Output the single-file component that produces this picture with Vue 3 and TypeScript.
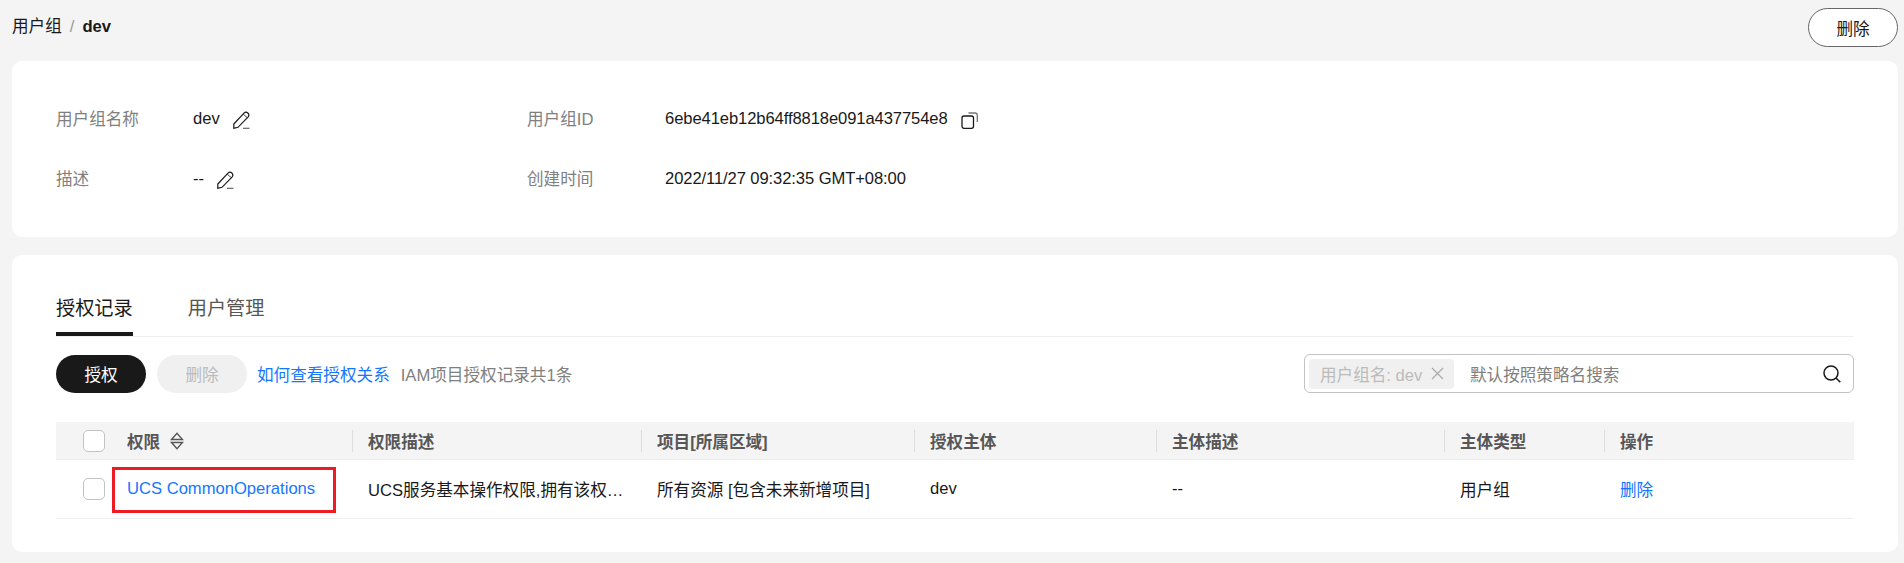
<script setup lang="ts">
const columns = [
  { title: '权限描述' },
  { title: '项目[所属区域]' },
  { title: '授权主体' },
  { title: '主体描述' },
  { title: '主体类型' },
  { title: '操作' },
]
</script>

<template>
  <div class="page">
    <header class="topbar">
      <div class="crumb">
        <span>用户组</span><span class="sep">/</span><strong>dev</strong>
      </div>
      <button class="btn-outline" type="button">删除</button>
    </header>

    <section class="card info">
      <div class="info-grid">
        <div class="field field-a">
          <span class="label">用户组名称</span>
          <span class="value">dev</span>
          <svg class="ico pencil" viewBox="0 0 18 18" fill="none" stroke="currentColor" stroke-width="1.200">
            <path d="M.8 13 11 2.200c1-1 2.600-1.200 3.800-.2s1.400 2.600.4 3.800L5 16.300.8 17.300z" />
            <path d="M10.200 3.200l4.300 3.600" stroke-width="0.8" />
            <path d="M10 17.300h6.500" stroke="#666" />
          </svg>
        </div>
        <div class="field">
          <span class="label">用户组ID</span>
          <span class="value latin">6ebe41eb12b64ff8818e091a437754e8</span>
          <svg class="ico copy" viewBox="0 0 17 17" fill="none" stroke="currentColor" stroke-width="1.300">
            <rect x="1" y="4" width="11.500" height="12.300" rx="2" />
            <path d="M7.500 1h6.500c1.300 0 2.300 1 2.300 2.300V10" stroke="#777" />
          </svg>
        </div>
        <div class="field field-a">
          <span class="label">描述</span>
          <span class="value">--</span>
          <svg class="ico pencil" viewBox="0 0 18 18" fill="none" stroke="currentColor" stroke-width="1.200">
            <path d="M.8 13 11 2.200c1-1 2.600-1.200 3.800-.2s1.400 2.600.4 3.800L5 16.300.8 17.300z" />
            <path d="M10.200 3.200l4.300 3.600" stroke-width="0.8" />
            <path d="M10 17.300h6.500" stroke="#666" />
          </svg>
        </div>
        <div class="field">
          <span class="label">创建时间</span>
          <span class="value latin">2022/11/27 09:32:35 GMT+08:00</span>
        </div>
      </div>
    </section>

    <section class="card records">
      <nav class="tabs">
        <span class="tab active">授权记录</span>
        <span class="tab">用户管理</span>
      </nav>

      <div class="toolbar">
        <button class="btn-primary" type="button">授权</button>
        <button class="btn-disabled" type="button">删除</button>
        <a class="link help">如何查看授权关系</a>
        <span class="count">IAM项目授权记录共1条</span>
        <div class="search">
          <span class="tag">用户组名: dev
            <svg class="tag-x" viewBox="0 0 13 13" fill="none" stroke="currentColor" stroke-width="1.200">
              <path d="M1 1l11 11M12 1 1 12" />
            </svg>
          </span>
          <span class="placeholder">默认按照策略名搜索</span>
          <svg class="search-ico" viewBox="0 0 18 18" fill="none" stroke="#191919" stroke-width="1.500">
            <circle cx="8" cy="8" r="7" />
            <path d="M13 13l4.300 4.300" />
          </svg>
        </div>
      </div>

      <div class="table">
        <div class="row head">
          <div class="cell check"><span class="box"></span></div>
          <div class="cell first">
            权限
            <svg class="sort" viewBox="0 0 14 18" fill="none" stroke="#575757" stroke-width="1.400">
              <path d="M1.500 7.500 7 1.200l5.500 6.300zM1.500 10.500 7 16.800l5.500-6.300z" />
            </svg>
          </div>
          <div v-for="c in columns" :key="c.title" class="cell titled">{{ c.title }}</div>
        </div>
        <div class="row body">
          <div class="cell check"><span class="box"></span></div>
          <div class="cell first"><a class="link">UCS CommonOperations</a></div>
          <div class="cell">UCS服务基本操作权限,拥有该权…</div>
          <div class="cell">所有资源 [包含未来新增项目]</div>
          <div class="cell">dev</div>
          <div class="cell">--</div>
          <div class="cell">用户组</div>
          <div class="cell"><a class="link">删除</a></div>
        </div>
        <div class="mark"></div>
      </div>
    </section>
  </div>
</template>

<style>
html, body { margin: 0; background: #f4f4f4; }
</style>

<style scoped>
.page {
  box-sizing: border-box;
  width: 1904px;
  height: 563px;
  padding: 0 6px 0 12px;
  background: #f4f4f4;
  font-family: "Liberation Sans", "Noto Sans CJK SC", sans-serif;
  font-size: 16.6px;
  color: #191919;
  overflow: hidden;
}
.topbar {
  height: 61px;
  display: flex;
  align-items: flex-start;
  justify-content: space-between;
}
.crumb {
  margin-top: 16px;
  line-height: 22px;
  display: flex;
  align-items: center;
}
.crumb .sep { margin: 0 8px; color: #999; }
.crumb strong { font-weight: 700; }
.btn-outline {
  margin-top: 8px;
  width: 90px;
  height: 39px;
  border: 1px solid #666;
  border-radius: 20px;
  background: #fff;
  color: #191919;
  font: inherit;
  padding: 0;
}
.card {
  background: #fff;
  border-radius: 10px;
}
.info {
  height: 176px;
  padding: 29px 44px 0;
  box-sizing: border-box;
}
.info-grid {
  display: grid;
  grid-template-columns: 471px 1fr;
  grid-auto-rows: 60px;
}
.field {
  display: flex;
  align-items: center;
  height: 58px;
}
.label {
  width: 138px;
  flex: none;
  margin-top: -2px;
  color: #808080;
}
.field-a .label { width: 137px; }
.field-a .ico { margin-left: 13px; }
.ico { display: block; flex: none; }
.pencil { width: 18px; height: 18px; margin-top: 2px; }
.copy { width: 17px; height: 17px; margin-left: 13px; margin-top: 2px; }
.latin { letter-spacing: -0.1px; }
.records {
  margin-top: 18px;
  height: 297px;
  padding: 0 44px;
  box-sizing: border-box;
}
.tabs {
  display: flex;
  gap: 55px;
  height: 82px;
  box-sizing: border-box;
  padding-top: 36px;
  border-bottom: 1px solid #eee;
}
.tab {
  height: 45px;
  box-sizing: border-box;
  line-height: 36px;
  font-size: 19.2px;
  color: #575757;
}
.tab.active {
  color: #191919;
  border-bottom: 4px solid #191919;
}
.toolbar {
  display: flex;
  align-items: center;
  margin-top: 17px;
  height: 39px;
}
.btn-primary, .btn-disabled {
  width: 90px;
  height: 38px;
  margin-top: 1px;
  padding: 0;
  border: 0;
  border-radius: 19px;
  font: inherit;
}
.btn-primary { background: #191919; color: #fff; }
.btn-disabled { background: #f0f0f0; color: #bbb; margin-left: 11px; }
.link { color: #1476ff; }
.help { margin-left: 10px; }
.count { margin-left: 11px; color: #808080; }
.search {
  margin-left: auto;
  width: 550px;
  height: 39px;
  box-sizing: border-box;
  border: 1px solid #c2c2c2;
  border-radius: 6px;
  display: flex;
  align-items: center;
  padding: 0 12px 0 4px;
}
.tag {
  width: 145px;
  height: 30px;
  box-sizing: border-box;
  background: #f0f0f0;
  border-radius: 4px;
  padding-left: 11px;
  display: flex;
  align-items: center;
  color: #bbb;
}
.tag-x { width: 13px; height: 13px; margin-left: 9px; color: #aaa; }
.placeholder { margin-left: 16px; color: #808080; }
.search-ico { width: 18px; height: 18px; margin-left: auto; }
.table {
  position: relative;
  margin-top: 29px;
}
.row {
  display: grid;
  grid-template-columns: 56px 240px 289px 273px 242px 288px 160px 250px;
  align-items: center;
}
.head {
  height: 37px;
  background: #f4f4f4;
  border-bottom: 1px solid #eee;
  font-weight: 700;
  color: #575757;
}
.body {
  height: 58px;
  border-bottom: 1px solid #eee;
}
.cell {
  box-sizing: border-box;
  padding-left: 16px;
  min-width: 0;
  display: flex;
  align-items: center;
  white-space: nowrap;
}
.first { padding-left: 15px; }
.check { padding-left: 27px; }
.box {
  display: block;
  width: 22px;
  height: 22px;
  box-sizing: border-box;
  border: 1px solid #c2c2c2;
  border-radius: 5px;
  background: #fff;
}
.titled { position: relative; }
.titled::before {
  content: "";
  position: absolute;
  left: 0;
  top: 50%;
  height: 22px;
  margin-top: -11px;
  width: 1px;
  background: #ddd;
}
.sort { width: 14px; height: 18px; margin-left: 10px; }
.mark {
  position: absolute;
  left: 56px;
  top: 45px;
  width: 224px;
  height: 46px;
  box-sizing: border-box;
  border: 3px solid #ed1c24;
  pointer-events: none;
}
</style>
